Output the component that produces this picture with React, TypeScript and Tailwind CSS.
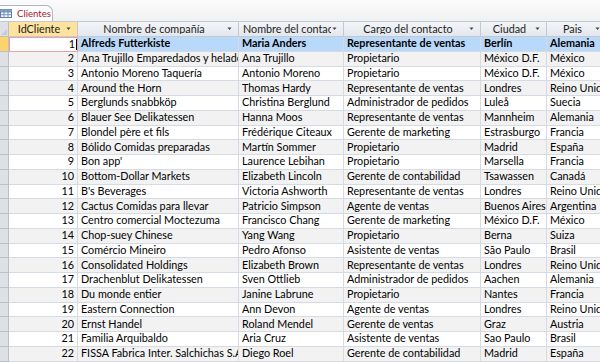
const rows: [number, string, string, string, string, string][] = [
  [1, "Alfreds Futterkiste", "Maria Anders", "Representante de ventas", "Berlín", "Alemania"],
  [2, "Ana Trujillo Emparedados y helados", "Ana Trujillo", "Propietario", "México D.F.", "México"],
  [3, "Antonio Moreno Taquería", "Antonio Moreno", "Propietario", "México D.F.", "México"],
  [4, "Around the Horn", "Thomas Hardy", "Representante de ventas", "Londres", "Reino Unido"],
  [5, "Berglunds snabbköp", "Christina Berglund", "Administrador de pedidos", "Luleå", "Suecia"],
  [6, "Blauer See Delikatessen", "Hanna Moos", "Representante de ventas", "Mannheim", "Alemania"],
  [7, "Blondel père et fils", "Frédérique Citeaux", "Gerente de marketing", "Estrasburgo", "Francia"],
  [8, "Bólido Comidas preparadas", "Martín Sommer", "Propietario", "Madrid", "España"],
  [9, "Bon app'", "Laurence Lebihan", "Propietario", "Marsella", "Francia"],
  [10, "Bottom-Dollar Markets", "Elizabeth Lincoln", "Gerente de contabilidad", "Tsawassen", "Canadá"],
  [11, "B's Beverages", "Victoria Ashworth", "Representante de ventas", "Londres", "Reino Unido"],
  [12, "Cactus Comidas para llevar", "Patricio Simpson", "Agente de ventas", "Buenos Aires", "Argentina"],
  [13, "Centro comercial Moctezuma", "Francisco Chang", "Gerente de marketing", "México D.F.", "México"],
  [14, "Chop-suey Chinese", "Yang Wang", "Propietario", "Berna", "Suiza"],
  [15, "Comércio Mineiro", "Pedro Afonso", "Asistente de ventas", "São Paulo", "Brasil"],
  [16, "Consolidated Holdings", "Elizabeth Brown", "Representante de ventas", "Londres", "Reino Unido"],
  [17, "Drachenblut Delikatessen", "Sven Ottlieb", "Administrador de pedidos", "Aachen", "Alemania"],
  [18, "Du monde entier", "Janine Labrune", "Propietario", "Nantes", "Francia"],
  [19, "Eastern Connection", "Ann Devon", "Agente de ventas", "Londres", "Reino Unido"],
  [20, "Ernst Handel", "Roland Mendel", "Gerente de ventas", "Graz", "Austria"],
  [21, "Familia Arquibaldo", "Aria Cruz", "Asistente de ventas", "Sao Paulo", "Brasil"],
  [22, "FISSA Fabrica Inter. Salchichas S.A.", "Diego Roel", "Gerente de contabilidad", "Madrid", "España"],
];

const Arrow = () => (
  <svg width="7" height="4" viewBox="0 0 7 4" className="shrink-0">
    <path d="M1.5 0.5h4L3.5 3z" fill="#444" />
  </svg>
);

const Header = ({ label, className }: { label: string; className: string }) => (
  <div className={`flex items-center shrink-0 border-r border-b border-[#c2c9d3] pl-1 pr-[5px] h-full ${className}`}>
    <span className="flex-1 overflow-hidden whitespace-nowrap text-center text-[#1c1c1c]">{label}</span>
    <Arrow />
  </div>
);

export default function App() {
  return (
    <div
      className="w-[600px] h-[362px] overflow-hidden bg-white text-[10.8px] leading-none text-black"
      style={{ fontFamily: "Lato, 'Open Sans', sans-serif" }}
    >
      {/* Tab strip */}
      <div className="h-[21px] bg-gradient-to-b from-[#fcfcfc] to-[#f0f1f3] flex items-end">
        <div className="h-[16px] w-[53px] bg-white border-t border-r border-[#b1b7c0] rounded-tr-[7px] flex items-center gap-[5px]">
          <svg width="12" height="9" viewBox="0 0 12 9" className="shrink-0">
            <rect x="0.5" y="0.5" width="11" height="8" fill="#f3f7fc" stroke="#5d7fab" />
            <rect x="0.5" y="0.5" width="11" height="2.5" fill="#8fa9cc" />
            <path d="M0.5 3h11M0.5 5.7h11M4 0.5v8M8 0.5v8" stroke="#5d7fab" strokeWidth="0.8" />
          </svg>
          <span className="text-[9.6px] text-[#a3202b]">Clientes</span>
        </div>
      </div>

      {/* Header row */}
      <div className="flex h-[16px] bg-gradient-to-b from-[#f3f5f8] to-[#e2e6eb] border-t border-[#c2c9d3]">
        <div className="w-[9px] shrink-0 border-r border-b border-[#b9c0ca] bg-[#dde1e6] relative">
          <svg width="6" height="6" viewBox="0 0 6 6" className="absolute right-[1px] bottom-[1px]">
            <path d="M6 0v6H0z" fill="#c7ccd3" />
          </svg>
        </div>
        <Header label="IdCliente" className="w-[69px] bg-none bg-[#fde39e]" />
        <Header label="Nombre de compañía" className="w-[161px]" />
        <Header label="Nombre del contacto" className="w-[105px]" />
        <Header label="Cargo del contacto" className="w-[137px]" />
        <Header label="Ciudad" className="w-[66px]" />
        <Header label="Pais" className="w-[60px]" />
      </div>

      {/* Data rows */}
      {rows.map(([id, company, contact, role, city, country], i) => {
        const selected = i === 0;
        const bg = selected ? "bg-[#b9d9fa] font-bold" : i % 2 === 1 ? "bg-[#f2f2f2]" : "bg-white";
        const cell =
          "shrink-0 overflow-hidden whitespace-nowrap border-r border-b border-[#d6dbe3] px-[3px] flex items-center h-full";
        return (
          <div key={id} className={`flex h-[14.75px] ${bg}`}>
            <div
              className={`w-[9px] shrink-0 border-r border-b border-[#b9c0ca] h-full ${
                selected ? "bg-[#fcd56a]" : "bg-[#dde1e6]"
              }`}
            />
            {selected ? (
              <div className="w-[69px] shrink-0 h-full bg-white border border-[#f0a0a0] flex items-center justify-end font-normal">
                <span>{id}</span>
                <span className="w-px h-[11px] bg-black ml-[1px]" />
              </div>
            ) : (
              <div className={`w-[69px] justify-end ${cell}`}>{id}</div>
            )}
            <div className={`w-[161px] ${cell}`}>{company}</div>
            <div className={`w-[105px] ${cell}`}>{contact}</div>
            <div className={`w-[137px] ${cell}`}>{role}</div>
            <div className={`w-[66px] ${cell}`}>{city}</div>
            <div className={`w-[60px] ${cell}`}>{country}</div>
          </div>
        );
      })}
    </div>
  );
}
